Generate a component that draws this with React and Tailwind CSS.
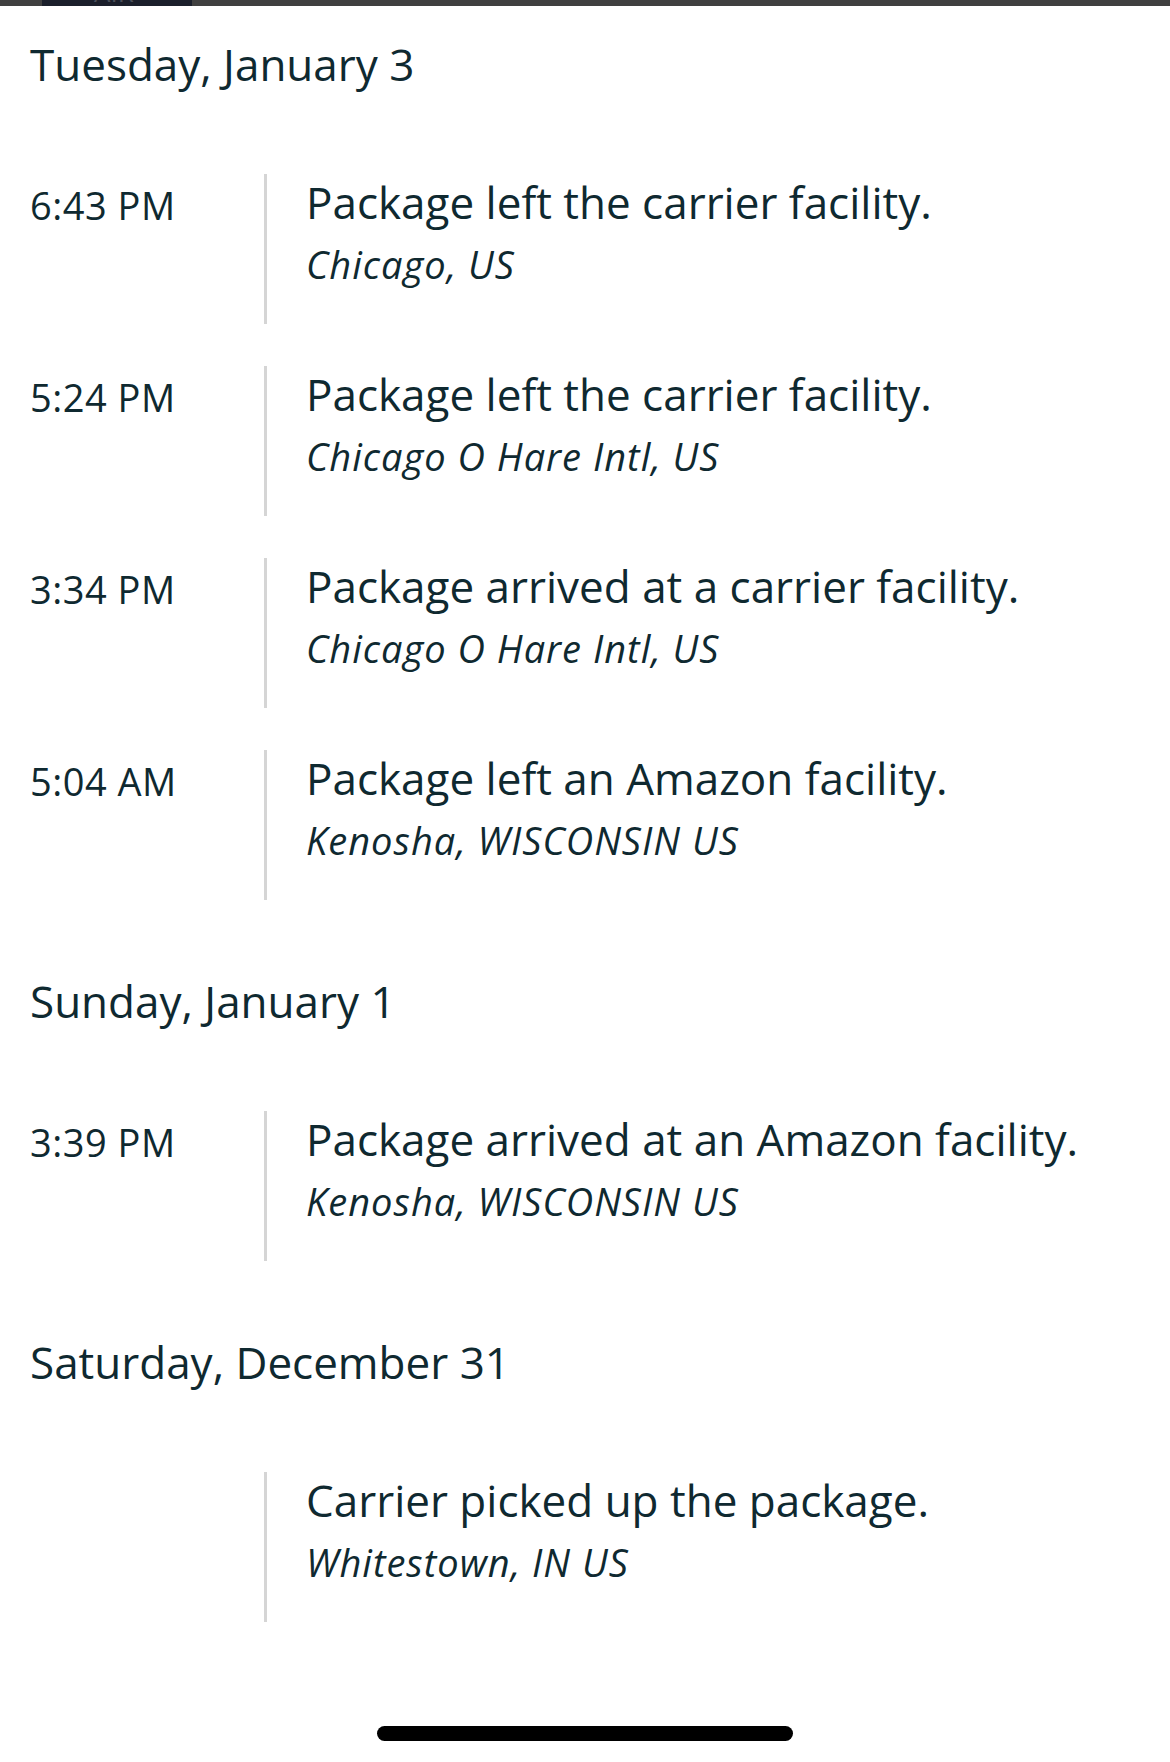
const sections = [
  {
    date: 'Tuesday, January 3',
    events: [
      { time: '6:43 PM', title: 'Package left the carrier facility.', place: 'Chicago, US' },
      { time: '5:24 PM', title: 'Package left the carrier facility.', place: 'Chicago O Hare Intl, US' },
      { time: '3:34 PM', title: 'Package arrived at a carrier facility.', place: 'Chicago O Hare Intl, US' },
      { time: '5:04 AM', title: 'Package left an Amazon facility.', place: 'Kenosha, WISCONSIN US' },
    ],
  },
  {
    date: 'Sunday, January 1',
    events: [
      { time: '3:39 PM', title: 'Package arrived at an Amazon facility.', place: 'Kenosha, WISCONSIN US' },
    ],
  },
  {
    date: 'Saturday, December 31',
    events: [{ time: '', title: 'Carrier picked up the package.', place: 'Whitestown, IN US' }],
  },
]

function TrackingEvent({ time, title, place }) {
  return (
    <div className="flex h-[150px]">
      <div className="w-[234px] shrink-0 pt-[3px] text-[38px] leading-[56px] tracking-[0.5px]">{time}</div>
      <div className="w-[3px] shrink-0 bg-[#d5d5d5]" />
      <div className="pl-[39px]">
        <div className="text-[44px] leading-[56px] whitespace-nowrap">{title}</div>
        <div className="mt-[6px] text-[38px] italic leading-[56px] tracking-[1px] whitespace-nowrap">{place}</div>
      </div>
    </div>
  )
}

export default function App() {
  return (
    <div className="h-[1762px] w-full overflow-hidden bg-white text-[#0f2930] font-['Open_Sans',sans-serif]">
      {/* cropped tab strip from the screen above */}
      <div className="flex h-[6px] bg-[#404040]">
        <div className="ml-[42px] w-[150px] overflow-hidden bg-[#1b1f2b]">
          <div className="-mt-[22px] pl-[52px] text-[26px] leading-[28px] text-[#4a4e58]">AIR</div>
        </div>
      </div>

      <div className="px-[30px]">
        {sections.map((s, i) => (
          <section key={s.date} className={i === 0 ? 'mt-[28px]' : 'mt-[71px]'}>
            <h2 className="h-[60px] text-[44px] leading-[60px] whitespace-nowrap">{s.date}</h2>
            <div className="mt-[80px] flex flex-col gap-[42px]">
              {s.events.map((e, j) => (
                <TrackingEvent key={j} {...e} />
              ))}
            </div>
          </section>
        ))}
      </div>

      <div className="mx-auto mt-[104px] h-[15px] w-[416px] rounded-full bg-black" />
    </div>
  )
}
